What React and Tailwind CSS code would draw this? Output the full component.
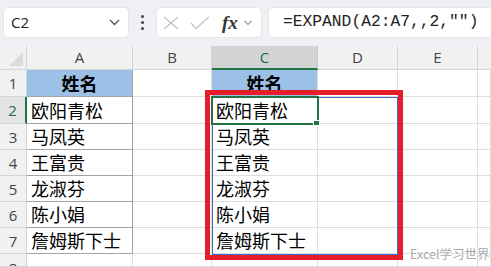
import React from "react";

const cjk = { fontFamily: '"Noto Sans CJK SC", "Noto Sans", sans-serif' };
const sans = { fontFamily: '"Open Sans", "Liberation Sans", sans-serif' };

function ColHead({ label, active, last }) {
  return (
    <div
      className={
        "flex items-center justify-center text-[15px] border-b border-r " +
        (active
          ? "bg-[#d3d3d3] text-[#1e6b41] border-r-[#c8c8c8] border-b-2 border-b-[#217346]"
          : "bg-[#f1f1f1] text-[#444] border-[#d4d4d4]") +
        (last ? " border-r-0" : "")
      }
      style={sans}
    >
      {label}
    </div>
  );
}

function RowHead({ n, active, cut }) {
  return (
    <div
      className={
        "flex justify-center text-[15px] border-b overflow-hidden " +
        (cut ? "items-start pt-[6px] " : "items-center ") +
        (active
          ? "bg-[#e4e4e4] text-[#1e6b41] border-r-2 border-r-[#217346] border-b-[#d4d4d4]"
          : "bg-[#f1f1f1] text-[#444] border-r border-[#d4d4d4]")
      }
      style={sans}
    >
      <span className="leading-[16px]">{n}</span>
    </div>
  );
}

function Cell({ children, variant }) {
  let cls = "border-r border-b border-[#dedede] bg-white";
  if (variant === "a") cls = "border-r border-b border-[#a5a5a5] bg-white";
  if (variant === "ah") cls = "border-r border-b border-[#a5a5a5] bg-[#9bc2e6]";
  if (variant === "ch") cls = "border-r border-b border-[#dedede] bg-[#9bc2e6]";
  const head = variant === "ah" || variant === "ch";
  return (
    <div
      className={
        cls +
        " flex items-end pb-[1px] overflow-hidden whitespace-nowrap text-[18px] leading-[24px] text-black " +
        (head ? "justify-center font-bold" : "pl-[4px]")
      }
      style={cjk}
    >
      {children}
    </div>
  );
}

const names = ["欧阳青松", "马凤英", "王富贵", "龙淑芬", "陈小娟", "詹姆斯下士"];

export default function App() {
  const rows = [];
  rows.push(
    <div key="corner" className="bg-[#f1f1f1] border-r border-b border-[#d4d4d4] relative">
      <svg className="absolute right-[3px] bottom-[3px]" width="14" height="14" viewBox="0 0 14 14">
        <polygon points="14,0 14,14 0,14" fill="#dcdcdc" />
      </svg>
    </div>
  );
  ["A", "B", "C", "D", "E", ""].forEach((l, i) =>
    rows.push(<ColHead key={"h" + i} label={l} active={l === "C"} last={i === 5} />)
  );
  rows.push(<RowHead key="r1" n={1} />);
  rows.push(<Cell key="a1" variant="ah">姓名</Cell>);
  rows.push(<Cell key="b1" />);
  rows.push(<Cell key="c1" variant="ch">姓名</Cell>);
  rows.push(<Cell key="d1" />);
  rows.push(<Cell key="e1" />);
  rows.push(<Cell key="f1" />);
  names.forEach((nm, i) => {
    const r = i + 2;
    rows.push(<RowHead key={"r" + r} n={r} active={r === 2} />);
    rows.push(<Cell key={"a" + r} variant="a">{nm}</Cell>);
    rows.push(<Cell key={"b" + r} />);
    rows.push(<Cell key={"c" + r}>{nm}</Cell>);
    rows.push(<Cell key={"d" + r} />);
    rows.push(<Cell key={"e" + r} />);
    rows.push(<Cell key={"f" + r} />);
  });
  rows.push(<RowHead key="r8" n={8} cut />);
  for (let i = 0; i < 6; i++) rows.push(<Cell key={"x8" + i} />);

  return (
    <div className="w-[491px] h-[267px] overflow-hidden bg-white">
      {/* Formula bar */}
      <div className="h-[46px] bg-[#eef0f3] flex items-start pt-[7px] pl-[3px]">
        <div className="w-[126px] h-[31px] bg-white rounded-[5px] border border-[#e3e5e8] flex items-center justify-between pl-[7px] pr-[8px]">
          <span className="text-[15px] text-[#222]" style={sans}>C2</span>
          <svg width="11" height="7" viewBox="0 0 11 7">
            <polyline points="1,1 5.5,5.5 10,1" fill="none" stroke="#555" strokeWidth="1.3" />
          </svg>
        </div>
        <div className="w-[27px] h-[31px] flex flex-col items-center justify-center gap-[3px]">
          <span className="w-[3px] h-[3px] bg-[#444] rounded-full" />
          <span className="w-[3px] h-[3px] bg-[#444] rounded-full" />
          <span className="w-[3px] h-[3px] bg-[#444] rounded-full" />
        </div>
        <div className="w-[106px] h-[31px] bg-white rounded-[5px] border border-[#e3e5e8] flex items-center pl-[6px]">
          <svg width="16" height="14" viewBox="0 0 16 14">
            <path d="M1 1 L15 13 M15 1 L1 13" stroke="#c2c2c2" strokeWidth="1.3" fill="none" />
          </svg>
          <svg className="ml-[11px]" width="20" height="14" viewBox="0 0 20 14">
            <polyline points="1,7 6,12.5 19,1" stroke="#c2c2c2" strokeWidth="1.3" fill="none" />
          </svg>
          <span
            className="ml-[12px] text-[19px] italic font-bold text-[#333] leading-none"
            style={{ fontFamily: '"Liberation Serif", serif' }}
          >
            fx
          </span>
          <svg className="ml-[6px]" width="8" height="6" viewBox="0 0 8 6">
            <polyline points="0.5,1 4,4.5 7.5,1" fill="none" stroke="#999" strokeWidth="1.1" />
          </svg>
        </div>
        <div className="ml-[6px] flex-1 h-[31px] bg-white rounded-l-[5px] border border-r-0 border-[#e3e5e8] flex items-center pl-[14px]">
          <span className="text-[16.3px] text-[#222]" style={{ fontFamily: '"Liberation Mono", monospace' }}>
            =EXPAND(A2:A7,,2,"")
          </span>
        </div>
      </div>

      {/* Sheet */}
      <div className="relative">
        <div className="grid grid-cols-[27px_106px_79px_106px_80px_80px_1fr] grid-rows-[24px_27px_27px_26px_26px_26px_26px_26px_13px]">
          {rows}
        </div>
        <div className="absolute left-[212px] top-[51px] w-[186px] h-[158px] border border-[#3f6fc4] pointer-events-none" />
        <div className="absolute left-[211px] top-[50px] w-[108px] h-[29px] border-2 border-[#217346] pointer-events-none" />
        <div className="absolute left-[313px] top-[74px] w-[7px] h-[6px] bg-[#217346] border border-white pointer-events-none" />
        <div className="absolute left-[205px] top-[44px] w-[198px] h-[170px] border-[5px] border-[#e61e2a] pointer-events-none" />
        <div
          className="absolute left-[410px] top-[201px] text-[12.5px] leading-[14px] text-[#a9a9a9] whitespace-nowrap"
          style={{ ...cjk, textShadow: "0 0 2px #fff, 0 0 2px #fff" }}
        >
          Excel学习世界
        </div>
      </div>
    </div>
  );
}
